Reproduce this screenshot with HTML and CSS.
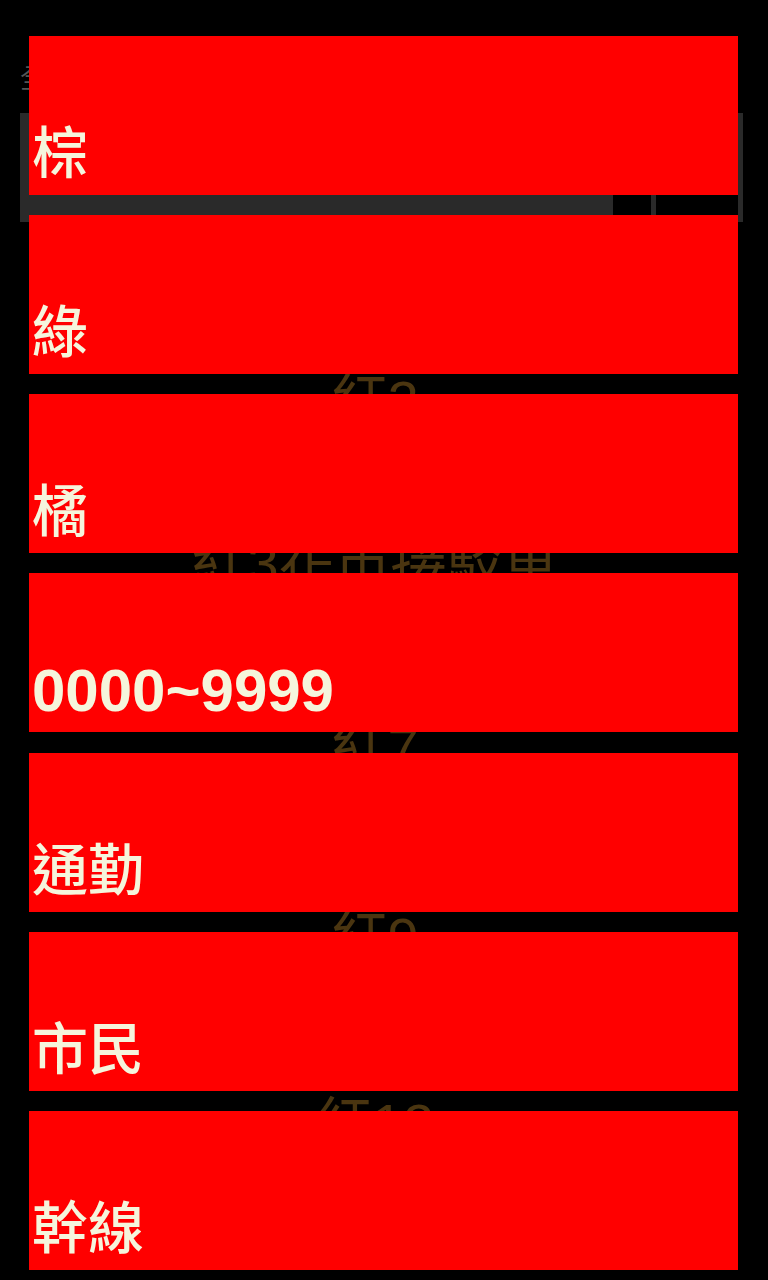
FILE: index.html
```html
<!DOCTYPE html>
<html lang="zh-Hant">
<head>
<meta charset="utf-8">
<title>路線</title>
<link rel="stylesheet" href="styles.css">
</head>
<body>
<div class="page">
  <div class="content">
    <div class="label">全部路線</div>
    <div class="search-row">
      <div class="search-box"></div>
      <div class="search-btn"></div>
    </div>
    <div class="route-list">
      <div class="route">紅2</div>
      <div class="route">紅3花市接駁車</div>
      <div class="route">紅7</div>
      <div class="route">紅9</div>
      <div class="route">紅12</div>
    </div>
  </div>
  <div class="tiles">
    <div class="tile"><span class="tile-text">棕</span></div>
    <div class="tile"><span class="tile-text">綠</span></div>
    <div class="tile"><span class="tile-text">橘</span></div>
    <div class="tile"><span class="tile-text tile-num">0000~9999</span></div>
    <div class="tile"><span class="tile-text">通勤</span></div>
    <div class="tile"><span class="tile-text">市民</span></div>
    <div class="tile"><span class="tile-text">幹線</span></div>
  </div>
</div>
</body>
</html>
```

FILE: styles.css
```css
html, body {
  margin: 0;
  padding: 0;
  background: #000;
}

body {
  width: 768px;
  height: 1280px;
  overflow: hidden;
  font-family: "Liberation Sans", "Noto Sans CJK TC", sans-serif;
}

.page {
  position: relative;
  width: 768px;
  height: 1280px;
}

.content {
  padding: 66px 25px 0 20px;
}

.label {
  font-size: 26px;
  line-height: 26px;
  color: #555;
}

.search-row {
  display: flex;
  gap: 38px;
  margin-top: 21px;
  height: 109px;
}

.search-box {
  width: 593px;
  background: #2a2a2a;
}

.search-btn {
  width: 92px;
  box-sizing: border-box;
  border: 5px solid #2a2a2a;
}

.route-list {
  display: flex;
  flex-direction: column;
  align-items: center;
  margin-top: 151px;
  padding-right: 13px;
}

.route {
  font-size: 56px;
  line-height: 56px;
  height: 56px;
  color: #4a3510;
  white-space: nowrap;
}

.route:nth-child(2) { margin-top: 107px; }
.route:nth-child(3) { margin-top: 128px; }
.route:nth-child(4) { margin-top: 134px; }
.route:nth-child(5) { margin-top: 130px; }

.tiles {
  position: absolute;
  top: 36px;
  left: 29px;
  width: 709px;
  display: flex;
  flex-direction: column;
  gap: 20.17px;
}

.tile {
  height: 159px;
  background: #ff0000;
  display: flex;
  flex-direction: column;
  justify-content: flex-end;
  padding: 0 0 11px 3px;
  box-sizing: border-box;
}

.tile-text {
  font-size: 56px;
  line-height: 60px;
  font-weight: 500;
  color: #f5f5dc;
  white-space: nowrap;
}

.tile-num {
  font-size: 60px;
  font-weight: 700;
}
```
